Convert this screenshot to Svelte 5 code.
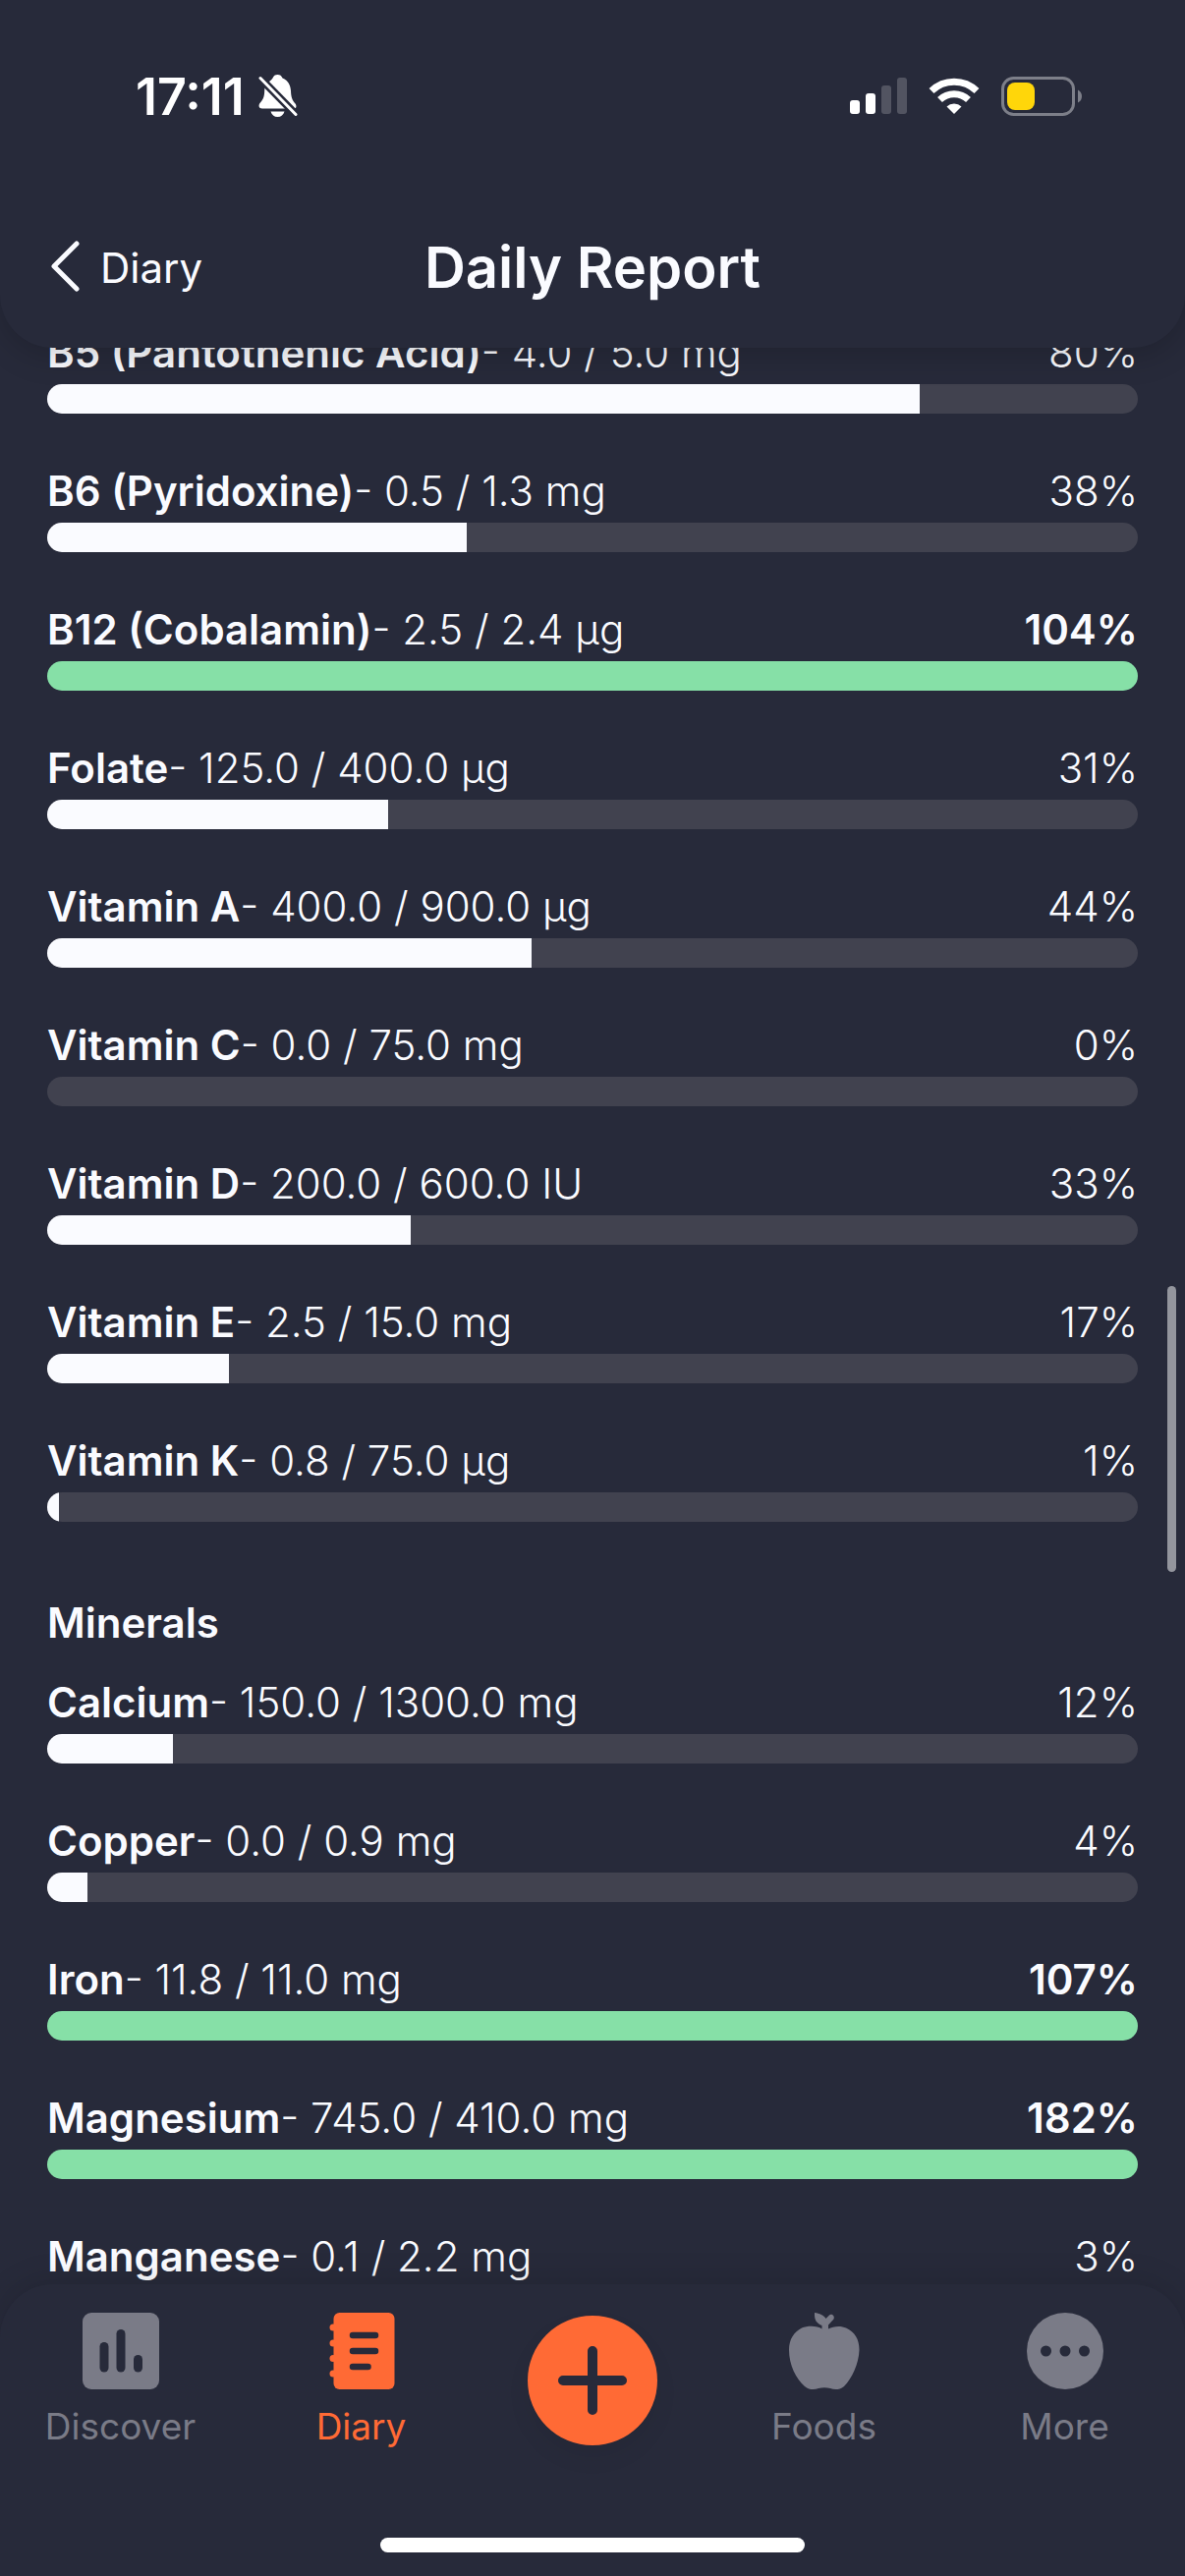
<script>
  const vitamins = [
    { name: "B5 (Pantothenic Acid)", value: 4, goal: 5, unit: "mg" },
    { name: "B6 (Pyridoxine)", value: 0.5, goal: 1.3, unit: "mg" },
    { name: "B12 (Cobalamin)", value: 2.5, goal: 2.4, unit: "µg" },
    { name: "Folate", value: 125, goal: 400, unit: "µg" },
    { name: "Vitamin A", value: 400, goal: 900, unit: "µg" },
    { name: "Vitamin C", value: 0, goal: 75, unit: "mg" },
    { name: "Vitamin D", value: 200, goal: 600, unit: "IU" },
    { name: "Vitamin E", value: 2.5, goal: 15, unit: "mg" },
    { name: "Vitamin K", value: 0.8, goal: 75, unit: "µg" },
  ];

  const minerals = [
    { name: "Calcium", value: 150, goal: 1300, unit: "mg" },
    { name: "Copper", value: 0.033, goal: 0.9, unit: "mg" },
    { name: "Iron", value: 11.8, goal: 11, unit: "mg" },
    { name: "Magnesium", value: 745, goal: 410, unit: "mg" },
    { name: "Manganese", value: 0.06, goal: 2.2, unit: "mg" },
  ];

  const percent = (item) => (item.value / item.goal) * 100;

  let tab = $state("diary");
</script>

{#snippet nutrient(item)}
  <li class="nutrient" class:done={percent(item) >= 100}>
    <div class="line">
      <p><strong>{item.name}</strong>- {item.value.toFixed(1)} / {item.goal.toFixed(1)} {item.unit}</p>
      <span class="percent">{Math.round(percent(item))}%</span>
    </div>
    <div
      class="track"
      role="progressbar"
      aria-label={item.name}
      aria-valuenow={Math.round(percent(item))}
    >
      <div class="fill" style="width: {Math.min(percent(item), 100)}%"></div>
    </div>
  </li>
{/snippet}

<div class="screen">
  <header>
    <div class="status">
      <div class="clock">
        <span>17:11</span>
        <svg width="40" height="44" viewBox="0 0 40 44">
          <path
            fill="#fff"
            d="M11 7C13 5.500 14 4.500 14.500 3.500C15.500 1 17 0 19.500 0s4 1 5 3.500c6 2.500 8 7 8.500 13c.3 7 1.500 9.500 4.500 13c1.500 2 1.500 5-1.500 5H4C0 34.500 0 31 1.500 29c3-3.500 4.500-6 4.700-12.500c0-3 .5-5 2-7.500z"
          />
          <path fill="#fff" d="M12.500 37.500h14c-1 3.500-3.500 5.500-7 5.500s-6-2-7-5.500z" />
          <path d="M-1 0.500L41 43.500" stroke="#272a3a" stroke-width="8" />
          <path d="M2 3.500L38 40.500" stroke="#fff" stroke-width="3" stroke-linecap="round" />
        </svg>
      </div>
      <div class="signals">
        <svg width="58" height="38" viewBox="0 0 58 38" fill="#fff">
          <rect x="0" y="23" width="10" height="14" rx="3" />
          <rect x="16" y="16" width="10" height="21" rx="3" />
          <rect x="32" y="8" width="10" height="29" rx="3" opacity="0.2" />
          <rect x="48" y="0" width="10" height="37" rx="3" opacity="0.2" />
        </svg>
        <svg width="52" height="38" viewBox="0 0 52 38" fill="none" stroke="#fff">
          <path d="M3 13.500A33 33 0 0 1 49 13.500" stroke-width="7" />
          <path d="M11.500 22.500A21 21 0 0 1 40.500 22.500" stroke-width="7" />
          <path d="M26 37L18.500 29.500A11 11 0 0 1 33.500 29.500z" fill="#fff" stroke="none" />
        </svg>
        <svg width="83" height="40" viewBox="0 0 83 40">
          <rect x="1.500" y="1.500" width="72" height="37" rx="11" fill="none" stroke="#7d7f89" stroke-width="3" />
          <path d="M78 13.500q4 2 4 6.500t-4 6.500z" fill="#7d7f89" />
          <rect x="6" y="6" width="28" height="28" rx="8" fill="#ffd60a" />
        </svg>
      </div>
    </div>
    <div class="titlebar">
      <a class="back" href="#diary">
        <svg width="32" height="54" viewBox="0 0 32 54">
          <path
            d="M28 3L5 26L28 49"
            fill="none"
            stroke="#fafbff"
            stroke-width="5"
            stroke-linecap="round"
            stroke-linejoin="round"
          />
        </svg>
        Diary
      </a>
      <h1>Daily Report</h1>
    </div>
  </header>

  <main>
    <div class="scroller">
      <ul>
        {#each vitamins as item}
          {@render nutrient(item)}
        {/each}
      </ul>
      <h2>Minerals</h2>
      <ul>
        {#each minerals as item}
          {@render nutrient(item)}
        {/each}
      </ul>
    </div>
    <div class="scrollbar"></div>
  </main>

  <nav>
    <div class="tabs">
      <a href="#discover" class:active={tab == "discover"} onclick={() => (tab = "discover")}>
        <svg width="80" height="80" viewBox="0 0 80 80">
          <rect x="1" y="1" width="78" height="78" rx="9" fill="currentColor" />
          <g stroke="#272a3a" stroke-width="9" stroke-linecap="round">
            <path d="M23 35.500V57" />
            <path d="M40 22.500V57" />
            <path d="M57.500 48.500V57" />
          </g>
        </svg>
        Discover
      </a>
      <a href="#diary" class:active={tab == "diary"} onclick={() => (tab = "diary")}>
        <svg width="80" height="80" viewBox="0 0 80 80">
          <rect x="11.500" y="1" width="62" height="78" rx="6" fill="currentColor" />
          <g fill="currentColor">
            <circle cx="11" cy="16" r="3.500" />
            <circle cx="11" cy="32" r="3.500" />
            <circle cx="11" cy="47.500" r="3.500" />
            <circle cx="11" cy="63" r="3.500" />
          </g>
          <g stroke="#272a3a" stroke-width="6.500" stroke-linecap="round">
            <path d="M31 24H54" />
            <path d="M31 40H54" />
            <path d="M31 56H46.500" />
          </g>
        </svg>
        Diary
      </a>
      <button class="add" aria-label="Add">
        <svg width="70" height="70" viewBox="0 0 70 70">
          <path d="M35 5V65M5 35H65" stroke="#272a3a" stroke-width="10" stroke-linecap="round" />
        </svg>
      </button>
      <a href="#foods" class:active={tab == "foods"} onclick={() => (tab = "foods")}>
        <svg width="80" height="80" viewBox="0 0 80 80" fill="currentColor">
          <path
            d="M37.500 17.500V14C32 12 29.500 8 30 1C35 1.500 39.500 3.500 41.500 7L45 3.500C47.500 1.500 51 4.500 49.500 7.500L44 13.500V17.500C49 14.500 57 14 62 16.500C71 20.500 75.500 28 75.500 39C75 53 68 68 60 76C55 80 50 79.500 46 78C42 77 38 77 34 78C30 79.500 25 80 20 76C11 68 4 54 4 39C4 28 9 20.500 17 16.500C23 14 33 14 37.500 17.500z"
          />
        </svg>
        Foods
      </a>
      <a href="#more" class:active={tab == "more"} onclick={() => (tab = "more")}>
        <svg width="80" height="80" viewBox="0 0 80 80">
          <circle cx="40" cy="40" r="39" fill="currentColor" />
          <g fill="#272a3a">
            <circle cx="20.500" cy="40" r="5.500" />
            <circle cx="40" cy="40" r="5.500" />
            <circle cx="59.500" cy="40" r="5.500" />
          </g>
        </svg>
        More
      </a>
    </div>
    <div class="home"></div>
  </nav>
</div>

<style>
  :global(body) {
    background: #272a3a;
  }

  .screen {
    display: flex;
    flex-direction: column;
    height: 100vh;
    font-family: Inter, Roboto, sans-serif;
    color: #fafbff;
  }
  svg {
    display: block;
    flex: none;
  }

  /* Header */
  header {
    position: relative;
    z-index: 1;
    box-sizing: border-box;
    height: 354px;
    padding-top: 64px;
    border-radius: 0 0 54px 54px;
    background: #272a3a;
    box-shadow: 0 8px 32px rgba(0, 0, 0, 0.18);
  }
  .status {
    display: flex;
    align-items: center;
    justify-content: space-between;
    height: 68px;
    padding: 0 104px 0 138px;
    color: #fff;
  }
  .clock {
    display: flex;
    align-items: center;
    gap: 14px;
    font-size: 52px;
    font-weight: 600;
  }
  .signals {
    display: flex;
    align-items: center;
    gap: 22px;
  }
  .titlebar {
    display: grid;
    grid-template-columns: 1fr auto 1fr;
    align-items: center;
    height: 80px;
    margin-top: 100px;
    padding: 0 50px;
  }
  .back {
    display: flex;
    align-items: center;
    gap: 20px;
    font-size: 42px;
    font-weight: 400;
    color: inherit;
    text-decoration: none;
  }
  h1 {
    margin: 0;
    font-size: 58px;
    font-weight: 600;
  }

  /* Report */
  main {
    position: relative;
    flex: 1;
    min-height: 0;
    margin: -27px 0 -48px;
  }
  .scroller {
    height: 100%;
    overflow-y: auto;
    scrollbar-width: none;
    font-size: 42px;
    line-height: 64px;
  }
  ul {
    display: flex;
    flex-direction: column;
    gap: 47px;
    margin: 0;
    padding: 0 48px;
    list-style: none;
  }
  h2 {
    margin: 71px 48px 17px;
    font-size: 42px;
    font-weight: 600;
  }
  .line {
    display: flex;
    justify-content: space-between;
    font-weight: 300;
  }
  .line p {
    margin: 0;
  }
  .line strong {
    font-weight: 600;
  }
  .track {
    height: 30px;
    border-radius: 15px;
    background: #41424f;
    overflow: hidden;
  }
  .fill {
    height: 100%;
    background: #fafbff;
  }
  .done .fill {
    background: #86e0a7;
  }
  .done .percent {
    font-weight: 600;
  }
  .scrollbar {
    position: absolute;
    top: 48%;
    right: 9px;
    width: 9px;
    height: 291px;
    border-radius: 5px;
    background: #93959d;
  }

  /* Tab bar */
  nav {
    position: relative;
    z-index: 1;
    padding: 28px 0 24px;
    border-radius: 54px 54px 0 0;
    background: #272a3a;
    box-shadow: 0 -4px 32px rgba(0, 0, 0, 0.12);
  }
  .tabs {
    display: grid;
    grid-template-columns: 1fr 1fr 226px 1fr 1fr;
    justify-items: center;
    align-items: start;
  }
  .tabs a {
    display: flex;
    flex-direction: column;
    align-items: center;
    gap: 15px;
    font-size: 37px;
    line-height: 44px;
    color: #7a7b87;
    text-decoration: none;
  }
  .tabs a.active {
    color: #ff6a35;
  }
  .add {
    display: flex;
    align-items: center;
    justify-content: center;
    width: 132px;
    height: 132px;
    margin-top: 4px;
    padding: 0;
    border: none;
    border-radius: 50%;
    background: #ff6a35;
    box-shadow: 0 12px 24px rgba(0, 0, 0, 0.06);
    cursor: pointer;
  }
  .home {
    width: 432px;
    height: 15px;
    margin: 91px auto 0;
    border-radius: 8px;
    background: #fff;
  }
</style>
